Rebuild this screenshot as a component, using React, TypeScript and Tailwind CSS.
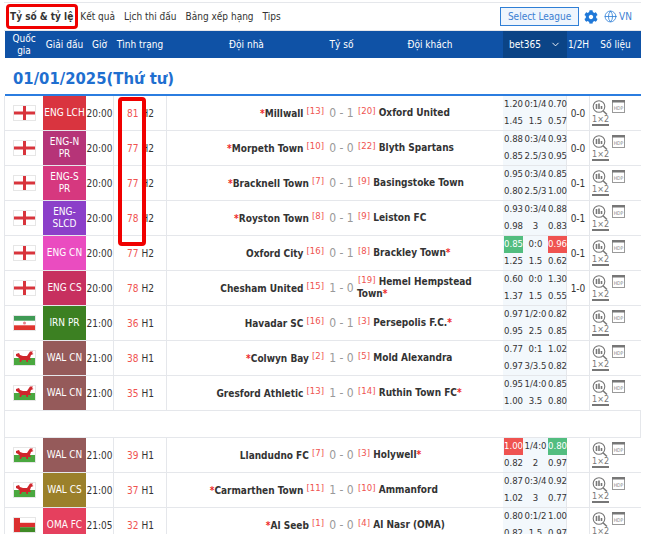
import React from 'react';
import { ChevronDown, Globe } from 'lucide-react';
import { FaCog } from 'react-icons/fa';

const cols = 'grid grid-cols-[38px_43px_27px_54px_159px_31px_146px_64px_23px_51px]';

type Match = {
  flag: string; league: string; color: string; time: string; min: string; half: string;
  home: string; homeRank: string; homeStar?: boolean; score: string;
  away: string; awayRank: string; awayStar?: boolean; odds: string[]; ht: string; hi?: 'gr' | 'rg';
};

const matches: Match[] = [
  { flag: 'eng', league: 'ENG LCH', color: 'bg-[#d9343f]', time: '20:00', min: '81', half: 'H2', home: 'Millwall', homeRank: '13', homeStar: true, score: '0 - 1', away: 'Oxford United', awayRank: '20', odds: ['1.20', '0:1/4', '0.70', '1.45', '1.5', '0.57'], ht: '0-0' },
  { flag: 'eng', league: 'ENG-N PR', color: 'bg-[#b63478]', time: '20:00', min: '77', half: 'H2', home: 'Morpeth Town', homeRank: '10', homeStar: true, score: '0 - 0', away: 'Blyth Spartans', awayRank: '22', odds: ['0.88', '0:3/4', '0.93', '0.85', '2.5/3', '0.95'], ht: '0-0' },
  { flag: 'eng', league: 'ENG-S PR', color: 'bg-[#d6387f]', time: '20:00', min: '77', half: 'H2', home: 'Bracknell Town', homeRank: '7', homeStar: true, score: '0 - 1', away: 'Basingstoke Town', awayRank: '9', odds: ['0.95', '0:3/4', '0.85', '0.80', '2.5/3', '1.00'], ht: '0-1' },
  { flag: 'eng', league: 'ENG-SLCD', color: 'bg-[#8b3fc9]', time: '20:00', min: '78', half: 'H2', home: 'Royston Town', homeRank: '8', homeStar: true, score: '0 - 1', away: 'Leiston FC', awayRank: '9', odds: ['0.93', '0:3/4', '0.88', '0.98', '3', '0.83'], ht: '0-1' },
  { flag: 'eng', league: 'ENG CN', color: 'bg-[#ea4cc0]', time: '20:00', min: '77', half: 'H2', home: 'Oxford City', homeRank: '16', score: '0 - 1', away: 'Brackley Town', awayRank: '8', awayStar: true, odds: ['0.85', '0:0', '0.96', '1.25', '1.5', '0.62'], ht: '0-1', hi: 'gr' },
  { flag: 'eng', league: 'ENG CS', color: 'bg-[#c7305f]', time: '20:00', min: '78', half: 'H2', home: 'Chesham United', homeRank: '15', score: '1 - 0', away: 'Hemel Hempstead Town', awayRank: '19', awayStar: true, odds: ['0.60', '0:0', '1.30', '1.37', '1.5', '0.55'], ht: '1-0' },
  { flag: 'irn', league: 'IRN PR', color: 'bg-[#3c8022]', time: '21:00', min: '36', half: 'H1', home: 'Havadar SC', homeRank: '16', score: '0 - 1', away: 'Persepolis F.C.', awayRank: '3', awayStar: true, odds: ['0.97', '1/2:0', '0.82', '0.95', '2.5', '0.85'], ht: '' },
  { flag: 'wal', league: 'WAL CN', color: 'bg-[#955a5a]', time: '21:00', min: '38', half: 'H1', home: 'Colwyn Bay', homeRank: '2', homeStar: true, score: '1 - 0', away: 'Mold Alexandra', awayRank: '5', odds: ['0.77', '0:1', '1.02', '0.97', '3/3.5', '0.82'], ht: '' },
  { flag: 'wal', league: 'WAL CN', color: 'bg-[#955a5a]', time: '21:00', min: '35', half: 'H1', home: 'Gresford Athletic', homeRank: '13', score: '1 - 0', away: 'Ruthin Town FC', awayRank: '14', awayStar: true, odds: ['0.95', '1/4:0', '0.85', '1.00', '3.5', '0.80'], ht: '' },
];

const later: Match[] = [
  { flag: 'wal', league: 'WAL CN', color: 'bg-[#955a5a]', time: '21:00', min: '39', half: 'H1', home: 'Llandudno FC', homeRank: '7', score: '0 - 0', away: 'Holywell', awayRank: '3', awayStar: true, odds: ['1.00', '1/4:0', '0.80', '0.82', '2', '0.97'], ht: '', hi: 'rg' },
  { flag: 'wal', league: 'WAL CS', color: 'bg-[#9b802a]', time: '21:00', min: '37', half: 'H1', home: 'Carmarthen Town', homeRank: '11', homeStar: true, score: '1 - 0', away: 'Ammanford', awayRank: '10', odds: ['0.87', '0:3/4', '0.92', '1.02', '3', '0.77'], ht: '' },
  { flag: 'oma', league: 'OMA FC', color: 'bg-[#e5405e]', time: '21:05', min: '32', half: 'H1', home: 'Al Seeb', homeRank: '1', homeStar: true, score: '0 - 0', away: 'Al Nasr (OMA)', awayRank: '4', odds: ['0.80', '0:1/2', '1.00', '0.82', '1.5', '0.97'], ht: '' },
];

const Flag = ({ kind }: { kind: string }) => (
  <svg width="23" height="16" viewBox="0 0 23 16" className="block">
    <rect x="0.5" y="0.5" width="22" height="15" fill="#fff" stroke="#e6e6e6" />
    {kind === 'eng' && (
      <>
        <rect x="10" y="1" width="3" height="14" fill="#d8343c" />
        <rect x="1" y="6.5" width="21" height="3" fill="#d8343c" />
      </>
    )}
    {kind === 'irn' && (
      <>
        <rect x="1" y="1" width="21" height="4.7" fill="#3f9a55" />
        <rect x="1" y="10.3" width="21" height="4.7" fill="#e0352f" />
        <circle cx="11.5" cy="8" r="1.5" fill="#e8808a" />
      </>
    )}
    {kind === 'wal' && (
      <>
        <rect x="1" y="8" width="21" height="7" fill="#4aa83f" />
        <path d="M3 4L6 3L7 5L10 6L14 6L16 3L17 1.500L20 1.500L19 3L20.500 4L18 5L17 8L18 10L15 10L15 12L13.500 12L13 10L9 10L8 12L6.500 12L7 9L5 7L3 6Z" fill="#d0262c" />
      </>
    )}
    {kind === 'oma' && (
      <>
        <rect x="1" y="5.800" width="21" height="4.400" fill="#db2f2f" />
        <rect x="1" y="10.200" width="21" height="4.800" fill="#3f8a26" />
        <rect x="1" y="1" width="6" height="14" fill="#db2f2f" />
      </>
    )}
  </svg>
);

const StatIcons = () => (
  <div className="flex items-start pl-[2px] pt-[4px] text-[#777]">
    <div className="flex w-[20px] flex-col items-start">
      <svg width="16" height="15" viewBox="0 0 16 15" fill="none" stroke="#777" className="block">
        <circle cx="7" cy="6.500" r="5.800" strokeWidth="1.100" />
        <path d="M11 10.800l4 3.700" strokeWidth="1.500" />
        <path d="M4.500 4v5M7 3.500v5.500M9.500 6v3" strokeWidth="1.600" />
      </svg>
      <span className="mt-[-1px] border-b-2 border-[#777] text-[9px] leading-[10px]">1×2</span>
    </div>
    <svg width="13" height="13" viewBox="0 0 13 13" className="block">
      <rect x="0.500" y="0.500" width="12" height="12" fill="#fff" stroke="#999" />
      <rect x="0" y="0" width="13" height="2.500" fill="#777" />
      <text x="6.500" y="9.500" fontSize="5" textAnchor="middle" fill="#888">HDP</text>
    </svg>
  </div>
);

const Rank = ({ n }: { n: string }) => (
  <span className="relative top-[-2px] text-[9.500px] font-normal text-[#ef5350]">[{n}]</span>
);
const Star = () => <span className="text-[#ee2b2b]">*</span>;

const OddsCell = ({ value, tone }: { value: string; tone?: 'g' | 'r' }) => (
  <span className={`flex h-[17px] items-center justify-center ${tone === 'g' ? 'bg-[#52bd7f] text-white' : tone === 'r' ? 'bg-[#ef5350] text-white' : ''}`}>
    {value}
  </span>
);

const Row = ({ m }: { m: Match }) => (
  <div className={`${cols} h-[35px] border-b border-l border-[#e5e7eb] text-[10px] text-[#333]`}>
    <div className="flex items-center justify-center"><Flag kind={m.flag} /></div>
    <div className={`${m.color} flex items-center justify-center px-[1px] text-center leading-[12px] text-white`}>{m.league}</div>
    <div className="flex items-center justify-center">{m.time}</div>
    <div className="flex items-center gap-[3px] border-x border-[#e5e7eb] pl-[13px]">
      <span className="text-[#ef5350]">{m.min}</span>
      <span>{m.half}</span>
    </div>
    <div className="flex items-center justify-end gap-[3px] pr-[2px]">
      <span className="font-bold">{m.homeStar && <Star />}{m.home}</span>
      <Rank n={m.homeRank} />
    </div>
    <div className="flex items-center justify-center text-[12px] text-[#999]">{m.score}</div>
    <div className="flex items-center leading-[12px]">
      <span className="font-bold"><span className="ml-[1px]"><Rank n={m.awayRank} /></span> {m.away}{m.awayStar && <Star />}</span>
    </div>
    <div className="grid grid-cols-[19px_25px_19px] content-center border-r border-[#e5e7eb] bg-[#f3f8fc] pl-[1px] text-center text-[9.500px]">
      {m.odds.map((o, i) => (
        <OddsCell key={i} value={o} tone={m.hi && i === 0 ? (m.hi === 'gr' ? 'g' : 'r') : m.hi && i === 2 ? (m.hi === 'gr' ? 'r' : 'g') : undefined} />
      ))}
    </div>
    <div className="flex items-center justify-center border-r border-[#e5e7eb]">{m.ht}</div>
    <StatIcons />
  </div>
);

export default function App() {
  return (
    <div className="relative h-[534px] w-[647px] overflow-hidden bg-white pl-[4px] pt-[2px] font-['DejaVu_Sans_Condensed','DejaVu_Sans',sans-serif] text-[10px]">
      <div className="w-[637px]">
        <div className="flex h-[29px] items-center justify-between border-y border-[#e5e7eb] pl-[6px] pr-[9px] text-[#333]">
          <div className="flex items-center gap-[9px]">
            <span className="mr-[-2px] font-bold">Tỷ số &amp; tỷ lệ</span>
            <span>Kết quả</span>
            <span>Lịch thi đấu</span>
            <span>Bảng xếp hạng</span>
            <span>Tips</span>
          </div>
          <div className="flex items-center">
            <button className="mr-[5px] h-[19px] w-[79px] border border-[#2f7fd6] bg-[#eef5fd] text-[10px] text-[#3b80d2]">Select League</button>
            <FaCog className="mr-[6px] h-[14px] w-[14px] text-[#1f78d8]" />
            <Globe className="mr-[2px] h-[13px] w-[13px] text-[#2f7fd6]" strokeWidth={1.5} />
            <span className="text-[#3b80d2]">VN</span>
          </div>
        </div>
        <div className={`${cols} ml-[1px] h-[27px] items-center bg-[#0f52a6] text-center leading-[12px] text-white`}>
          <div>Quốc gia</div>
          <div>Giải đấu</div>
          <div>Giờ</div>
          <div>Tình trạng</div>
          <div>Đội nhà</div>
          <div>Tỷ số</div>
          <div>Đội khách</div>
          <div className="flex h-full items-center justify-center gap-[9px] bg-[#0b4486]">bet365 <ChevronDown className="h-[11px] w-[11px]" /></div>
          <div>1/2H</div>
          <div>Số liệu</div>
        </div>
        <div className="ml-[1px] flex h-[38px] items-center border-b-2 border-[#2b7de0] pl-[8px] pt-[6px] text-[16.500px] font-bold text-[#1f6fd0]">01/01/2025(Thứ tư)</div>
        {matches.map((m, i) => <Row key={i} m={m} />)}
        <div className="h-[27px] border-x border-b border-[#e5e7eb]" />
        {later.map((m, i) => <Row key={i} m={m} />)}
      </div>
      {/* red annotation boxes */}
      <div className="absolute left-[6px] top-[4px] h-[25px] w-[72px] rounded-[4px] border-[3px] border-[#f00000]" />
      <div className="absolute left-[118px] top-[97px] h-[149px] w-[28px] rounded-[4px] border-[4px] border-[#f00000]" />
    </div>
  );
}
